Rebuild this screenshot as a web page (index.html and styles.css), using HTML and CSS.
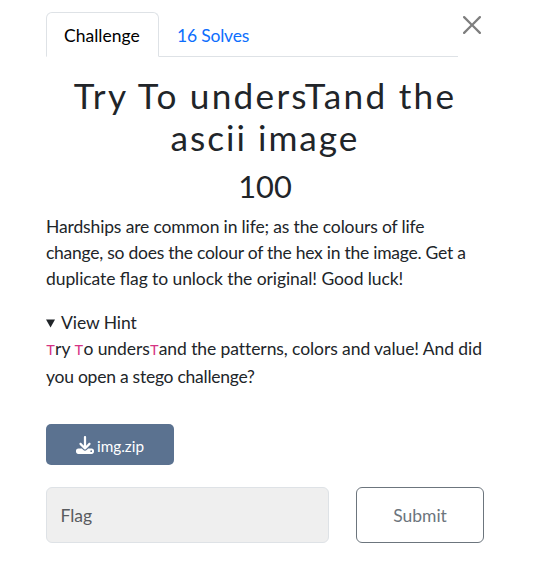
FILE: index.html
```html
<!DOCTYPE html>
<html lang="en">
<head>
<meta charset="utf-8">
<title>Challenge</title>
<link rel="stylesheet" href="styles.css">
</head>
<body>
<main class="modal">
  <header class="head">
    <nav class="tabs">
      <a class="tab active">Challenge</a>
      <a class="tab">16 Solves</a>
    </nav>
    <button class="close" aria-label="Close"><svg viewBox="0 0 16 16" width="18" height="18"><path d="M.293.293a1 1 0 0 1 1.414 0L8 6.586 14.293.293a1 1 0 1 1 1.414 1.414L9.414 8l6.293 6.293a1 1 0 0 1-1.414 1.414L8 9.414l-6.293 6.293a1 1 0 0 1-1.414-1.414L6.586 8 .293 1.707a1 1 0 0 1 0-1.414z"/></svg></button>
  </header>
  <h2 class="name"><span class="wide">Try To undersTand the</span><br>ascii image</h2>
  <h3 class="value">100</h3>
  <p class="desc"><span class="snug">Hardships are common in life; as the colours of life</span><br><span class="tight">change, so does the colour of the hex in the image. Get a</span><br><span class="trim">duplicate flag to unlock the original! Good luck!</span></p>
  <section class="hint">
    <div class="summary"><svg class="marker" width="9" height="9" viewBox="0 0 9 9"><path fill="currentColor" d="M0 .5h9L4.5 8.5z"/></svg>View Hint</div>
    <p class="hint-text"><span class="trim"><code>T</code>ry <code>T</code>o unders<code>T</code>and the patterns, colors and value! And did</span><br><span class="tight">you open a stego challenge?</span></p>
  </section>
  <a class="file"><svg viewBox="0 0 512 512" width="18" height="18"><path fill="currentColor" d="M288 32c0-17.7-14.300-32-32-32s-32 14.300-32 32V274.700l-73.400-73.400c-12.500-12.500-32.800-12.500-45.300 0s-12.500 32.800 0 45.300l128 128c12.500 12.500 32.800 12.500 45.300 0l128-128c12.500-12.500 12.500-32.800 0-45.300s-32.800-12.500-45.300 0L288 274.700V32zM64 352c-35.300 0-64 28.700-64 64v32c0 35.300 28.700 64 64 64H448c35.300 0 64-28.700 64-64V416c0-35.300-28.700-64-64-64H346.500l-45.300 45.300c-25 25-65.500 25-90.500 0L165.500 352H64zm368 56a24 24 0 1 1 0 48 24 24 0 1 1 0-48z"/></svg><span>img.zip</span></a>
  <form class="answer">
    <div class="flag">Flag</div>
    <button class="submit" type="button">Submit</button>
  </form>
</main>
</body>
</html>
```

FILE: styles.css
```css
* { box-sizing: border-box; }
body {
  margin: 0;
  background: #fff;
  color: #212529;
  font: 17.5px/26px Lato, sans-serif;
}
.modal { padding: 12px 51px 0 46px; }
.head { display: flex; height: 45px; margin-right: -25px; }
.tabs { display: flex; flex: 0 0 412px; border-bottom: 1px solid #dee2e6; }
.tab {
  height: 45px;
  padding: 10px 18px 10px 17px;
  border: 1px solid transparent;
  border-radius: 6px 6px 0 0;
  color: #0d6efd;
  white-space: nowrap;
  letter-spacing: -.2px;
}
.tab.active { width: 113px; color: #000; background: #fff; border-color: #dee2e6 #dee2e6 #fff; letter-spacing: 0; }
.close { margin: 4px 0 0 5px; padding: 0; width: 18px; height: 18px; border: 0; background: none; opacity: .5; }
.close svg { display: block; }
.name {
  margin: 17px 0 0;
  text-align: center;
  font-weight: 400;
  font-size: 35.2px;
  line-height: 42px;
  letter-spacing: 2px;
}
.wide { letter-spacing: 2.25px; }
.value { margin: 10px 0 0; text-align: center; font-weight: 400; font-size: 30.8px; line-height: 37px; }
.desc { margin: 9px 0 18px; white-space: nowrap; font-feature-settings: "liga" 1; }
.snug { letter-spacing: -.14px; }
.tight { letter-spacing: -.25px; }
.trim { letter-spacing: -.08px; }
.summary { display: flex; align-items: center; letter-spacing: -.08px; }
.marker { margin-right: 6px; }
.hint-text { margin: -1px 0 0; line-height: 28px; white-space: nowrap; }
code { font: 15.3px/1 "Liberation Mono", monospace; color: #d63384; }
.file {
  display: flex;
  align-items: center;
  justify-content: center;
  gap: 3px;
  width: 128px;
  height: 41px;
  margin-top: 33px;
  border-radius: 5px;
  background: #5b7290;
  color: #fff;
  font-size: 15.3px;
}
.file span { padding-top: 2px; }
.answer { display: flex; justify-content: space-between; margin-top: 22px; }
.flag {
  width: 283px;
  height: 56px;
  padding: 15px 14px 13px 13.5px;
  border: 1px solid #dee2e6;
  border-radius: 6px;
  background: #efefef;
  color: #595c5f;
}
.submit {
  width: 128px;
  height: 56px;
  padding: 2px 0 0;
  border: 1px solid #6c757d;
  border-radius: 6px;
  background: #fff;
  color: #6c757d;
  font: inherit;
}
```
